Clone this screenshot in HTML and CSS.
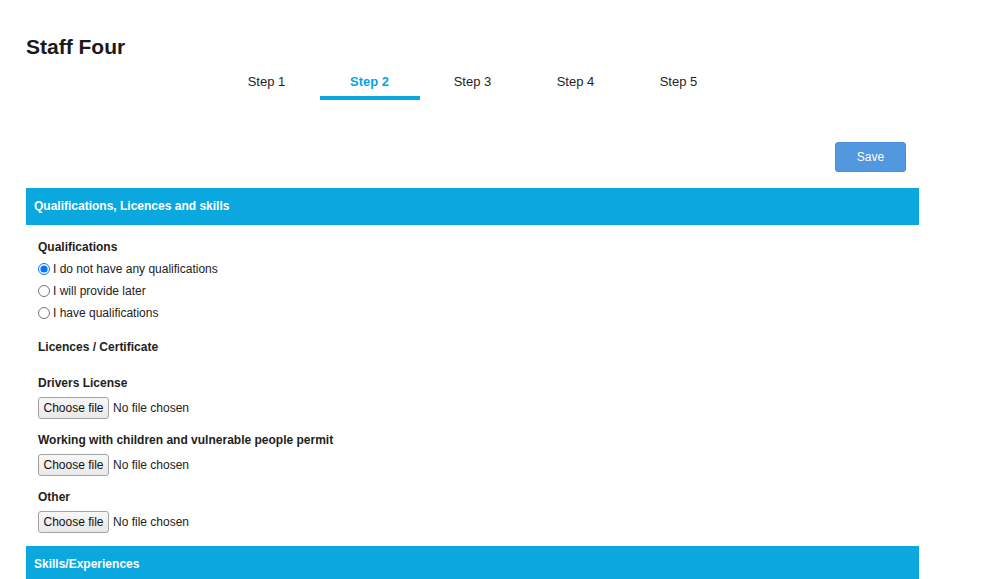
FILE: index.html
```html
<!DOCTYPE html>
<html lang="en">
<head>
<meta charset="utf-8">
<title>Staff Four</title>
<link rel="stylesheet" href="styles.css">
</head>
<body>
<div class="page">
  <h1 class="title">Staff Four</h1>
  <nav class="steps">
    <a class="step">Step 1</a>
    <a class="step active">Step 2</a>
    <a class="step">Step 3</a>
    <a class="step">Step 4</a>
    <a class="step">Step 5</a>
  </nav>
  <div class="actions">
    <button class="save" type="button">Save</button>
  </div>
  <section class="panel">
    <div class="panel-head">Qualifications, Licences and skills</div>
    <div class="panel-body">
      <div class="label">Qualifications</div>
      <div class="radios">
        <label class="radio"><input type="radio" name="q" checked>I do not have any qualifications</label>
        <label class="radio"><input type="radio" name="q">I will provide later</label>
        <label class="radio"><input type="radio" name="q">I have qualifications</label>
      </div>
      <div class="label sub">Licences / Certificate</div>
      <div class="field">
        <div class="label">Drivers License</div>
        <label class="file"><input class="file-input" type="file"><span class="file-btn">Choose file</span><span class="file-name">No file chosen</span></label>
      </div>
      <div class="field">
        <div class="label">Working with children and vulnerable people permit</div>
        <label class="file"><input class="file-input" type="file"><span class="file-btn">Choose file</span><span class="file-name">No file chosen</span></label>
      </div>
      <div class="field last">
        <div class="label">Other</div>
        <label class="file"><input class="file-input" type="file"><span class="file-btn">Choose file</span><span class="file-name">No file chosen</span></label>
      </div>
    </div>
  </section>
  <section class="panel">
    <div class="panel-head">Skills/Experiences</div>
  </section>
</div>
</body>
</html>
```
FILE: styles.css
```css
html, body {
  margin: 0;
  padding: 0;
  background: #fff;
}
body {
  font-family: "Liberation Sans", Arial, sans-serif;
  color: #1e1e1e;
  overflow: hidden;
}
.page {
  width: 893px;
  margin-left: 26px;
  padding-top: 35px;
}
.title {
  margin: 0;
  font-size: 21px;
  line-height: 24px;
  font-weight: bold;
  color: #1a1a1a;
}
.steps {
  display: flex;
  justify-content: center;
  gap: 3px;
}
.step {
  width: 100px;
  text-align: center;
  font-size: 13px;
  line-height: 15px;
  padding: 15px 0 7px;
  border-bottom: 4px solid transparent;
  color: #1e1e1e;
  cursor: pointer;
}
.step.active {
  color: #0aa3dc;
  font-weight: bold;
  border-bottom-color: #0aa8de;
}
.actions {
  display: flex;
  justify-content: flex-end;
  padding: 42px 13px 16px 0;
}
.save {
  width: 71px;
  height: 30px;
  border: 1px solid #4a8fd6;
  border-radius: 3px;
  background: #5298de;
  color: #fff;
  font-family: "Liberation Sans", Arial, sans-serif;
  font-size: 12px;
  padding: 0;
}
.panel-head {
  background: #0aa8de;
  color: #fff;
  font-weight: bold;
  font-size: 12px;
  height: 37px;
  line-height: 37px;
  padding: 0 8px;
}
.panel-body {
  padding: 15px 12px 13px;
}
.label {
  font-size: 12px;
  line-height: 15px;
  font-weight: bold;
  color: #1e1e1e;
}
.radios {
  margin-top: 3px;
  display: flex;
  flex-direction: column;
}
.radio {
  display: flex;
  align-items: center;
  height: 22px;
  font-size: 12px;
  color: #222;
}
.radio input {
  width: 12px;
  height: 12px;
  margin: 0 3px 1px 0;
}
.label.sub {
  margin-top: 16px;
  margin-bottom: 21px;
}
.field {
  margin-bottom: 14px;
}
.field.last {
  margin-bottom: 0;
}
.field .label {
  margin-bottom: 6px;
}
.file {
  display: flex;
  align-items: center;
  height: 22px;
  font-size: 12px;
  color: #222;
  cursor: pointer;
}
.file-input {
  display: none;
}
.file-btn {
  box-sizing: border-box;
  display: flex;
  align-items: center;
  justify-content: center;
  height: 22px;
  width: 71px;
  margin-right: 4px;
  border: 1px solid #a2a2a2;
  border-radius: 3px;
  background: linear-gradient(#f7f7f7, #e9e9e9);
  color: #111;
}
.file-name {
  color: #222;
}
```
